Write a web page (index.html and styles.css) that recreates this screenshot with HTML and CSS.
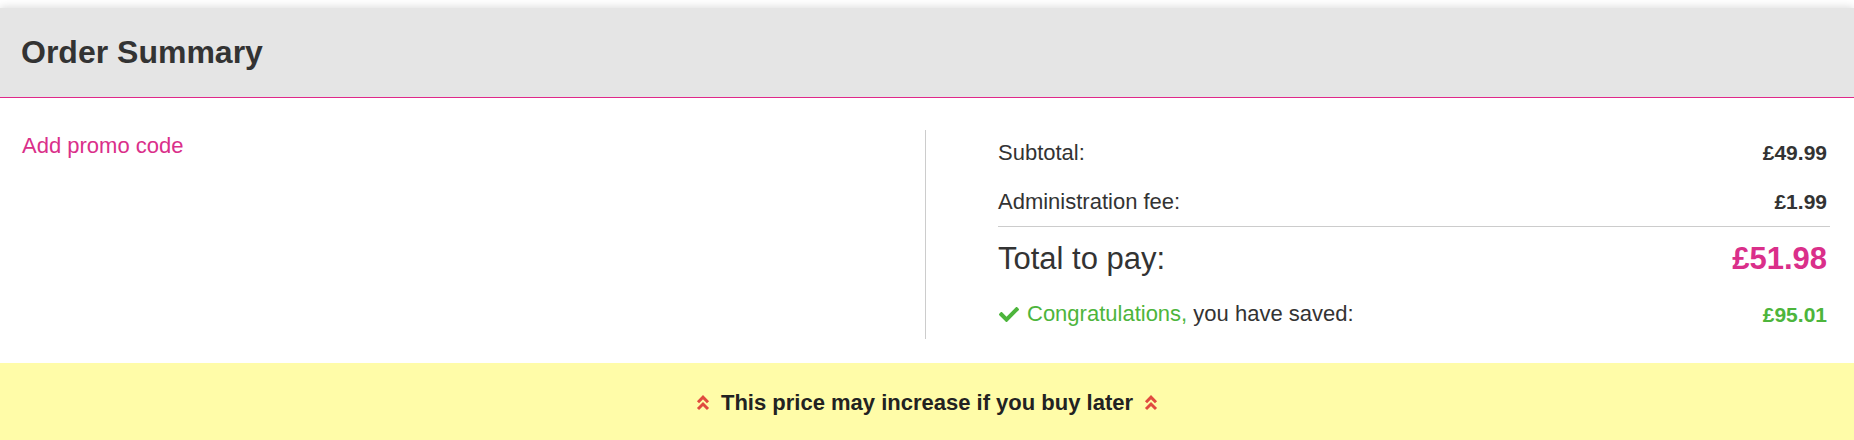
FILE: index.html
```html
<!DOCTYPE html>
<html lang="en">
<head>
<meta charset="utf-8">
<title>Order Summary</title>
<link rel="stylesheet" href="styles.css">
</head>
<body>
<div class="card">
  <header class="card-header">
    <h1 class="card-title">Order Summary</h1>
  </header>
  <section class="card-body">
    <div class="promo">
      <a class="promo-link" href="#">Add promo code</a>
    </div>
    <div class="totals">
      <div class="row row-first">
        <span class="label">Subtotal:</span>
        <strong class="value">£49.99</strong>
      </div>
      <div class="row row-divided">
        <span class="label">Administration fee:</span>
        <strong class="value">£1.99</strong>
      </div>
      <div class="row row-total">
        <span class="label">Total to pay:</span>
        <strong class="value">£51.98</strong>
      </div>
      <div class="row row-saved">
        <span class="label">
          <svg class="check" viewBox="0 65 512 384" aria-hidden="true"><path d="M173.898 439.404l-166.4-166.4c-9.997-9.997-9.997-26.206 0-36.204l36.203-36.204c9.997-9.998 26.207-9.998 36.204 0L192 312.69 432.095 72.596c9.997-9.997 26.207-9.997 36.204 0l36.203 36.204c9.997 9.997 9.997 26.206 0 36.204l-294.4 294.401c-9.998 9.997-26.207 9.997-36.204-.001z"/></svg>
          <span class="congrats">Congratulations,</span>&nbsp;you have saved:
        </span>
        <strong class="value">£95.01</strong>
      </div>
    </div>
  </section>
  <div class="notice">
    <svg class="chevrons" viewBox="0 0 14 18" aria-hidden="true"><polyline points="2,8.2 7,3.2 12,8.2"/><polyline points="2,15 7,10 12,15"/></svg>
    <span class="notice-text">This price may increase if you buy later</span>
    <svg class="chevrons" viewBox="0 0 14 18" aria-hidden="true"><polyline points="2,8.2 7,3.2 12,8.2"/><polyline points="2,15 7,10 12,15"/></svg>
  </div>
</div>
</body>
</html>
```
FILE: styles.css
```css
html, body {
  margin: 0;
  padding: 0;
}

body {
  padding-top: 8px;
  background: #ffffff;
  font-family: "Liberation Sans", Arial, Helvetica, sans-serif;
  color: #333333;
}

.card {
  background: #ffffff;
  box-shadow: 0 -1px 8px rgba(0, 0, 0, 0.14);
}

.card-header {
  background: #e5e5e5;
  padding: 25px 21px 26px;
  border-bottom: 1px solid #e0288a;
}

.card-title {
  margin: 0;
  font-size: 32px;
  line-height: 38px;
  font-weight: 700;
  color: #333333;
}

.card-body {
  display: grid;
  grid-template-columns: 925px 1fr;
  padding: 32px 0 24px;
}

.promo {
  padding: 3px 22px 0;
}

.promo-link {
  font-size: 22px;
  line-height: 26px;
  color: #da2f8a;
  text-decoration: none;
}

.totals {
  border-left: 1px solid #cccccc;
  padding: 0 24px 0 72px;
}

.row {
  display: flex;
  justify-content: space-between;
  align-items: baseline;
  padding: 12px 0 11px;
}

.row-first {
  padding-top: 10px;
}

.row-divided {
  border-bottom: 1px solid #cccccc;
}

.row-total {
  padding: 14px 0 12px;
}

.label {
  display: flex;
  align-items: center;
  font-size: 22px;
  line-height: 26px;
  color: #333333;
}

.value {
  font-size: 21px;
  line-height: 26px;
  font-weight: 700;
  color: #333333;
  padding-right: 3px;
}

.row-total .label {
  font-size: 31px;
  line-height: 36px;
}

.row-total .value {
  font-size: 31px;
  line-height: 36px;
  color: #da2f8a;
}

.row-saved .value {
  color: #4db53c;
}

.check {
  width: 20px;
  height: 15px;
  margin: 0 8px 0 1px;
  fill: #4db53c;
}

.congrats {
  color: #4db53c;
}

.notice {
  display: flex;
  justify-content: center;
  align-items: center;
  gap: 11px;
  background: #fffca8;
  padding: 27px 0 25px;
}

.notice-text {
  font-size: 22px;
  line-height: 26px;
  font-weight: 700;
  color: #222222;
}

.chevrons {
  width: 14px;
  height: 18px;
  fill: none;
  stroke: #e04a3f;
  stroke-width: 3;
}
```
